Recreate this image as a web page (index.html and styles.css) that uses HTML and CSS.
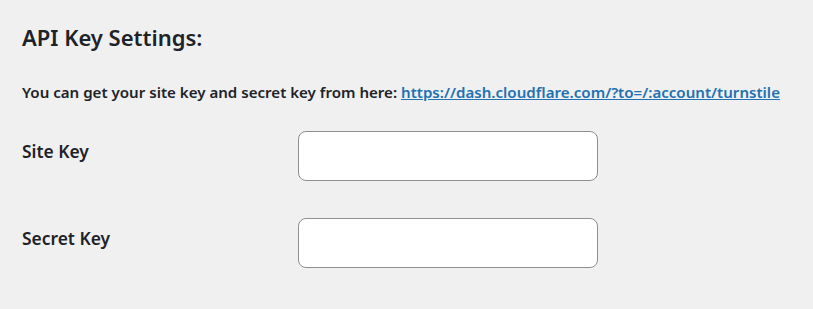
FILE: index.html
```html
<!DOCTYPE html>
<html>
<head>
<meta charset="utf-8">
<link rel="stylesheet" href="styles.css">
</head>
<body>
<div class="wrap">
  <h2 class="title">API Key Settings:</h2>
  <p class="desc">You can get your site key and secret key from here: <a href="#" class="link">https://dash.cloudflare.com/?to=/:account/turnstile</a></p>
  <div class="form">
    <div class="row">
      <label class="label">Site Key</label>
      <input class="field" type="text">
    </div>
    <div class="row">
      <label class="label">Secret Key</label>
      <input class="field" type="text">
    </div>
  </div>
</div>
</body>
</html>
```
FILE: styles.css
```css
html, body {
  margin: 0;
  padding: 0;
  background: #f0f0f1;
}
body {
  font-family: "Noto Sans", "Open Sans", sans-serif;
  color: #1d2327;
}
.wrap {
  padding: 22px 22px 0 22px;
}
.title {
  margin: 0;
  font-size: 22px;
  font-weight: 600;
  line-height: 30px;
}
.desc {
  margin: 30px 0 0 0;
  font-size: 15.1px;
  font-weight: 600;
  line-height: 20px;
}
.link {
  color: #2271b1;
  text-decoration: underline;
}
.form {
  margin-top: 29px;
  display: flex;
  flex-direction: column;
  gap: 37px;
}
.row {
  display: flex;
  align-items: center;
}
.label {
  width: 276px;
  font-size: 17.4px;
  font-weight: 600;
  margin-top: -10px;
}
.field {
  box-sizing: border-box;
  width: 300px;
  height: 50px;
  border: 1px solid #8c8f94;
  border-radius: 8px;
  background: #fff;
  margin: 0;
  padding: 0 8px;
}
```
